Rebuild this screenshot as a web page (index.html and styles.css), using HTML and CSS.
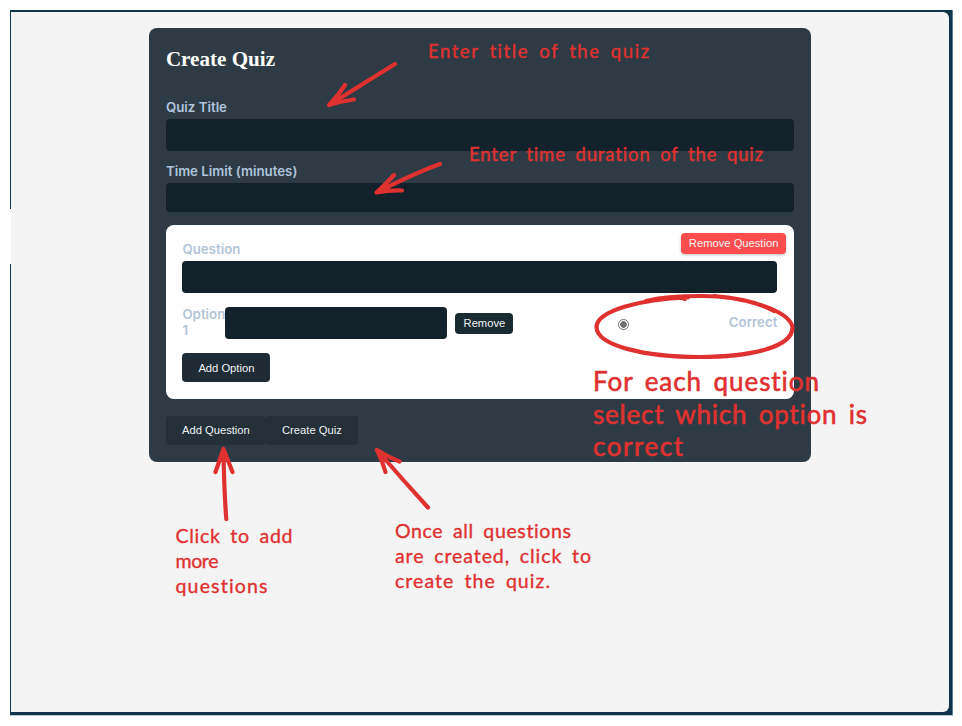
FILE: index.html
```html
<!DOCTYPE html>
<html lang="en">
<head>
<meta charset="utf-8">
<title>Create Quiz</title>
<link rel="stylesheet" href="styles.css">
</head>
<body>
<div class="frame">
<main class="page">
  <form class="card">
    <h1>Create Quiz</h1>
    <label class="label" for="title">Quiz Title</label>
    <input class="field" id="title" type="text">
    <label class="label" for="limit">Time Limit (minutes)</label>
    <input class="field short" id="limit" type="text">
    <section class="question">
      <button class="btn small danger" type="button">Remove Question</button>
      <label class="label" for="q">Question</label>
      <input class="field" id="q" type="text">
      <div class="option">
        <label class="label name" for="opt">Option 1</label>
        <input class="field answer" id="opt" type="text">
        <button class="btn small remove" type="button">Remove</button>
        <span class="radio"></span>
        <span class="label correct">Correct</span>
      </div>
      <button class="btn add" type="button">Add Option</button>
    </section>
    <div class="actions">
      <button class="btn dim wide" type="button">Add Question</button>
      <button class="btn dim" type="button">Create Quiz</button>
    </div>
  </form>
</main>
</div>
<svg class="notes" width="962" height="726" viewBox="0 0 962 726">
  <g class="stroke">
    <path d="M395 64Q366 82 329 105M345 85Q338 96 329 105Q342 101 354 99.500"/>
    <path d="M440 164Q415 173 376.500 192.500M394 175Q386 184 376.500 192.500Q390 190 402 190.500"/>
    <path d="M226.300 519Q224 490 223.500 449M215.500 472L223.500 449L232.500 472"/>
    <path d="M428 507.500Q402 479 377 450M385.500 472Q382 460 377 450Q388 457 399.500 461.500"/>
    <path d="M688 297.500C640 299 597 311 596.500 327C597 346 646 357 699 357C752 357 793 347 792.500 327C789 310 743 296 702 296C684 296 661 297 646 301M682 298L685 299M714 296Q752 299 774 311"/>
  </g>
  <g class="hand">
    <text x="428" y="57.500" textLength="221">Enter title of the quiz</text>
    <text x="469" y="160.500" textLength="294">Enter time duration of the quiz</text>
  </g>
  <g class="hand large">
    <text x="593" y="391" textLength="226">For each question</text>
    <text x="593" y="423.500" textLength="274">select which option is</text>
    <text x="593" y="456" textLength="90">correct</text>
  </g>
  <g class="hand medium">
    <text x="175.500" y="542.500" textLength="117">Click to add</text>
    <text x="175.500" y="568" textLength="43">more</text>
    <text x="175.500" y="593" textLength="92">questions</text>
    <text x="395" y="538" textLength="176">Once all questions</text>
    <text x="395" y="563" textLength="196">are created, click to</text>
    <text x="395" y="588" textLength="155">create the quiz.</text>
  </g>
</svg>
</body>
</html>
```
FILE: styles.css
```css
* { box-sizing: border-box; }

body {
  margin: 0;
  padding: 10px 9px 10px 10px;
  height: 726px;
  background: #fff;
  font-family: Inter, "Liberation Sans", sans-serif;
  position: relative;
  overflow: hidden;
}

.frame {
  height: 706px;
  padding: 2px 4px 4px 1px;
  background:
    linear-gradient(#fff, #fff) 0 199px / 1px 55px no-repeat,
    linear-gradient(#b8cbd9, #b8cbd9) 0 100% / 100% 1px no-repeat,
    linear-gradient(#5d7d92, #5d7d92) 100% 0 / 1px 100% no-repeat,
    #10344c;
}

.page {
  height: 100%;
  padding: 16.400px 0 0 138.400px;
  background: #f4f4f4;
  border-radius: 0 6px 6px 0;
}

.card {
  display: flex;
  flex-direction: column;
  width: 661.500px;
  height: 433.500px;
  padding: 16.500px 17px 16.500px 16.500px;
  background: #2e3b44;
  border-radius: 8px;
}

.card > *, .question > * { flex-shrink: 0; }

h1 {
  margin: 0 0 26.500px;
  height: 28px;
  font: bold 21.100px/28px "Liberation Serif", serif;
  color: #fff;
}

.label {
  height: 16px;
  font-size: 13.300px;
  font-weight: 600;
  line-height: 16px;
  color: #b0c4de;
  margin-bottom: 4px;
}

.field {
  display: block;
  width: 100%;
  height: 31.500px;
  margin: 0 0 12.500px;
  padding: 0 8px;
  border: 0;
  border-radius: 4px;
  background: #13212b;
  color: #fff;
}

.field.short { height: 29px; margin-bottom: 12.500px; }

.question {
  position: relative;
  display: flex;
  flex-direction: column;
  height: 174.500px;
  padding: 16.500px;
  background: #fff;
  border-radius: 8px;
}

.btn {
  height: 29px;
  padding: 1px 0 0;
  border: 0;
  border-radius: 4px;
  background: #202c35;
  color: #f0f2f3;
  font: 11.200px/1 "Liberation Sans", Arial, sans-serif;
}

.small { height: 21px; padding: 0; }

.danger {
  position: absolute;
  top: 8.500px;
  right: 8px;
  width: 104.500px;
  background: #ff4d4f;
  box-shadow: 0 1px 3px rgba(0, 0, 0, .25);
}

.question .label { color: #b3c4d8; }
.question .field { margin-bottom: 14.500px; }

.option {
  display: flex;
  height: 32px;
  margin-bottom: 14px;
}

.option .name {
  width: 43px;
  height: 32px;
  margin: -1.500px 0 0;
}

.question .answer { width: 221.500px; height: 32px; margin: 0; }

.remove {
  width: 58px;
  margin: 5.500px 0 0 8.500px;
  background: #1b2b32;
}

.radio {
  width: 11px;
  height: 11px;
  margin: 11.500px 0 0 105px;
  border: 1px solid #707070;
  border-radius: 50%;
  background: radial-gradient(circle, #707070 3px, #fff 3.600px);
}

.correct { margin: 6.500px 0 0 auto; }
.add { width: 88px; }
.actions { display: flex; margin-top: 16.500px; }
.dim { width: 92px; background: #242f38; }
.wide { width: 100px; }

.notes { position: absolute; left: 0; top: 0; }

.stroke {
  fill: none;
  stroke: #e03131;
  stroke-width: 4.200;
  stroke-linecap: round;
  stroke-linejoin: round;
}

.hand {
  fill: #e03131;
  stroke: #e03131;
  stroke-width: .35;
  stroke-linejoin: round;
  font-family: Lato, sans-serif;
  font-size: 18.500px;
  font-variant-ligatures: none;
  word-spacing: 4px;
}

.medium { font-size: 19.500px; }
.large { font-size: 26px; stroke-width: .6; }
```
